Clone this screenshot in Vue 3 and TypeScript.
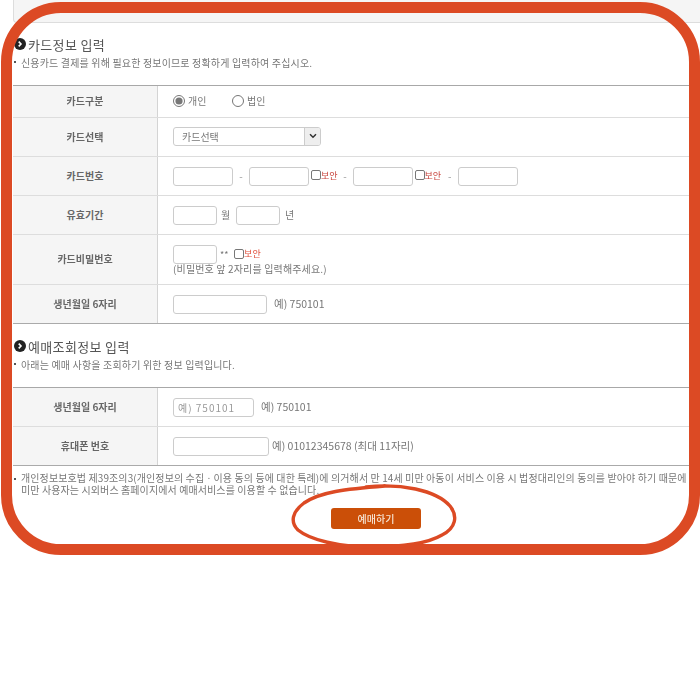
<script setup lang="ts">
const intro = '신용카드 결제를 위해 필요한 정보이므로 정확하게 입력하여 주십시오.'
</script>

<template>
  <div class="page">
    <div class="content">
      <div class="topbar"></div>

      <section class="head first">
        <h2><span class="dot"><svg width="12" height="12" viewBox="0 0 12 12"><circle cx="6" cy="6" r="6" fill="#222" /><path d="M4.7 3.6 7 6 4.7 8.4" fill="none" stroke="#fff" stroke-width="1.6" /></svg></span>카드정보 입력</h2>
        <p class="sub"><i></i>{{ intro }}</p>
      </section>

      <div class="table">
        <div class="row h32">
          <div class="th">카드구분</div>
          <div class="td">
            <label class="radio"><input type="radio" name="kind" checked />개인</label>
            <label class="radio"><input type="radio" name="kind" />법인</label>
          </div>
        </div>
        <div class="row h39">
          <div class="th">카드선택</div>
          <div class="td">
            <div class="select"><span class="val">카드선택</span><span class="arrow"><svg width="8" height="6" viewBox="0 0 8 6"><path d="M1 1.2 4 4.2 7 1.2" fill="none" stroke="#333" stroke-width="1.5" /></svg></span></div>
          </div>
        </div>
        <div class="row h39">
          <div class="th">카드번호</div>
          <div class="td">
            <input class="inp w60" />
            <span class="dash">-</span>
            <input class="inp w60" />
            <span class="safe"><span class="cb"></span><em>보안</em></span>
            <span class="dash d2">-</span>
            <input class="inp w60" />
            <span class="safe"><span class="cb"></span><em>보안</em></span>
            <span class="dash d3">-</span>
            <input class="inp w60" />
          </div>
        </div>
        <div class="row h39">
          <div class="th">유효기간</div>
          <div class="td">
            <input class="inp w44" />
            <span class="unit">월</span>
            <input class="inp w44" />
            <span class="unit">년</span>
          </div>
        </div>
        <div class="row h50">
          <div class="th">카드비밀번호</div>
          <div class="td stack">
            <div class="line">
              <input class="inp w44" />
              <span class="stars">**</span>
              <span class="safe tight"><span class="cb"></span><em>보안</em></span>
            </div>
            <div class="hint">(비밀번호 앞 2자리를 입력해주세요.)</div>
          </div>
        </div>
        <div class="row h39 last">
          <div class="th">생년월일 6자리</div>
          <div class="td">
            <input class="inp w94" />
            <span class="eg">예) 750101</span>
          </div>
        </div>
      </div>

      <section class="head second">
        <h2><span class="dot"><svg width="12" height="12" viewBox="0 0 12 12"><circle cx="6" cy="6" r="6" fill="#222" /><path d="M4.7 3.6 7 6 4.7 8.4" fill="none" stroke="#fff" stroke-width="1.6" /></svg></span>예매조회정보 입력</h2>
        <p class="sub"><i></i>아래는 예매 사항을 조회하기 위한 정보 입력입니다.</p>
      </section>

      <div class="table">
        <div class="row h39">
          <div class="th">생년월일 6자리</div>
          <div class="td">
            <input class="inp w81 ph" placeholder="예) 750101" />
            <span class="eg">예) 750101</span>
          </div>
        </div>
        <div class="row h39 last">
          <div class="th">휴대폰 번호</div>
          <div class="td">
            <input class="inp w96" />
            <span class="eg close">예) 01012345678 (최대 11자리)</span>
          </div>
        </div>
      </div>

      <div class="note">
        <i></i>
        <p>개인정보보호법 제39조의3(개인정보의 수집ㆍ이용 동의 등에 대한 특례)에 의거해서 만 14세 미만 아동이 서비스 이용 시 법정대리인의 동의를 받아야 하기 때문에<br />미만 사용자는 시외버스 홈페이지에서 예매서비스를 이용할 수 없습니다.</p>
      </div>

      <div class="actions"><button class="btn" type="button">예매하기</button></div>
    </div>

    <div class="frame"></div>
    <svg class="scribble" width="700" height="700" viewBox="0 0 700 700">
      <path d="M366 487 C400 483 436 490 450 506 C458 516 456 528 442 535 C425 545 395 547 370 547 C340 547 310 540 298 530 C290 522 292 512 304 503 C320 492 345 489 385 486" fill="none" stroke="#dc4a24" stroke-width="3.4" stroke-linecap="round" />
    </svg>
  </div>
</template>

<style scoped>
.page {
  position: relative;
  width: 700px;
  height: 700px;
  overflow: hidden;
  background: #fff;
  font-family: "Noto Sans CJK KR", "Noto Sans", sans-serif;
  color: #666;
}
.content {
  width: 860px;
  padding-left: 13px;
  box-sizing: border-box;
  filter: blur(0.35px);
}
.topbar {
  height: 22px;
  background: #f5f5f5;
  border-left: 1px solid #ddd;
  border-bottom: 1px solid #ddd;
  border-bottom-left-radius: 4px;
}
.head.first {
  padding-top: 11px;
  height: 51px;
}
.head.second {
  padding-top: 12px;
  height: 51px;
}
h2 {
  margin: 0;
  display: flex;
  align-items: center;
  height: 20px;
  font-size: 13px;
  font-weight: 400;
  color: #555;
  letter-spacing: 0.35px;
}
.dot {
  display: flex;
  margin-right: 2px;
  margin-left: 1px;
}
.sub {
  margin: 0;
  display: flex;
  align-items: center;
  height: 16px;
  font-size: 10px;
  letter-spacing: 0.16px;
  color: #777;
  white-space: nowrap;
}
.sub i,
.note i {
  flex: none;
  width: 2px;
  height: 2px;
  background: #555;
  margin: 0 5px 0 1px;
}
.table {
  border-top: 1px solid #a8a8a8;
}
.row {
  display: grid;
  grid-template-columns: 145px 1fr;
  border-bottom: 1px solid #ddd;
  box-sizing: border-box;
}
.row.last {
  border-bottom: 1px solid #aaa;
}
.h32 { height: 32px; }
.h39 { height: 39px; }
.h50 { height: 50px; }
.th {
  display: flex;
  align-items: center;
  justify-content: center;
  padding-bottom: 2px;
  background: #f5f5f5;
  border-right: 1px solid #d4d4d4;
  font-size: 10px;
  font-weight: 700;
  color: #666;
}
.td {
  display: flex;
  align-items: center;
  padding-left: 15px;
  font-size: 10px;
  color: #777;
  white-space: nowrap;
}
.stack {
  flex-direction: column;
  align-items: flex-start;
  justify-content: center;
  padding-top: 1px;
  letter-spacing: 0.15px;
}
.line {
  display: flex;
  align-items: center;
}
.hint {
  line-height: 12px;
  margin-top: -1px;
}
.radio {
  display: flex;
  align-items: center;
  width: 59px;
  margin-bottom: 2px;
}
.radio input {
  width: 12px;
  height: 12px;
  margin: 0 3px 0 0;
  accent-color: #777;
}
.select {
  display: flex;
  width: 148px;
  height: 19px;
  margin-bottom: 2px;
  border: 1px solid #ccc;
  border-radius: 3px;
  box-sizing: border-box;
  overflow: hidden;
}
.val {
  flex: 1;
  padding-left: 8px;
  line-height: 17px;
}
.arrow {
  width: 15px;
  display: flex;
  align-items: center;
  justify-content: center;
  background: #eee;
  border-left: 1px solid #ccc;
}
.inp {
  height: 19px;
  padding: 0;
  border: 1px solid #ccc;
  border-radius: 3px;
  box-sizing: border-box;
  background: #fff;
  outline: none;
}
.w44 { width: 44px; }
.w60 { width: 60px; }
.w81 { width: 81px; }
.w94 { width: 94px; }
.w96 { width: 96px; }
.ph {
  padding-left: 4px;
  font-family: inherit;
  font-size: 10px;
  letter-spacing: 1px;
}
.ph::placeholder {
  color: #999;
  opacity: 1;
}
.dash {
  width: 16px;
  margin-bottom: 2px;
  text-align: center;
  color: #999;
}
.d2 { width: 15px; }
.d3 { width: 17px; }
.safe {
  display: flex;
  align-items: center;
  margin-left: 2px;
  margin-bottom: 2px;
}
.safe em {
  font-style: normal;
  color: #c8443c;
  font-size: 9px;
}
.tight em {
  color: #e0503c;
}
.cb {
  width: 10px;
  height: 10px;
  border: 1px solid #777;
  border-radius: 2px;
  box-sizing: border-box;
}
.tight { margin-left: 3px; }
.stars {
  margin-left: 3px;
  width: 11px;
  font-size: 9px;
}
.unit {
  width: 19px;
  margin-bottom: 2px;
  padding-left: 4px;
  box-sizing: border-box;
}
.unit:last-child {
  padding-left: 5px;
}
.eg {
  margin-left: 7px;
  margin-bottom: 2px;
  font-size: 10.5px;
}
.eg.close {
  margin-left: 3px;
}
.note {
  display: flex;
  padding-top: 6px;
  height: 36px;
  font-size: 10px;
  letter-spacing: 0.1px;
  color: #777;
}
.note i {
  margin: 6px 5px 0 1px;
}
.note p {
  margin: 0;
  line-height: 12px;
  white-space: nowrap;
}
.actions {
  display: flex;
  width: 700px;
  padding-left: 318px;
  box-sizing: border-box;
}
.btn {
  width: 90px;
  height: 21px;
  padding: 0;
  border: 0;
  border-radius: 3px;
  background: #cb4f08;
  color: #f6e4d2;
  font-family: inherit;
  font-size: 10px;
  font-weight: 500;
}
.frame {
  position: absolute;
  left: 1px;
  top: 2px;
  width: 699px;
  height: 553px;
  border: 11px solid #dc4a24;
  border-radius: 60px;
  box-sizing: border-box;
  pointer-events: none;
}
.scribble {
  position: absolute;
  left: 0;
  top: 0;
  pointer-events: none;
}
</style>
